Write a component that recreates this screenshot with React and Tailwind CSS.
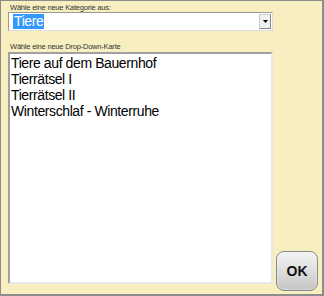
export default function App() {
  return (
    <div className="w-[324px] h-[296px] bg-[#f7efc0] border border-[#8c8c8c] border-r-2 border-b-2 flex flex-col pl-[7px] pt-[2px] pb-[3px]" style={{ fontFamily: '"Liberation Sans", Arial, sans-serif' }}>
      <div className="pl-[2px] text-[7.5px] leading-[9px] tracking-[-0.2px] text-[#333]">Wähle eine neue Kategorie aus:</div>
      <div className="w-[265px] h-[19px] bg-white border border-[#999] border-b-[#ddd] border-r-[#ddd] flex items-center">
        <span className="ml-[4px] bg-[#3399ff] text-white text-[14px] leading-[15px] tracking-[-0.4px] px-[1px]">Tiere</span>
        <div className="ml-auto mr-[1px] w-[12px] h-[15px] bg-[#f0f0f0] border border-[#ccc] border-r-[#888] border-b-[#888] flex items-center justify-center">
          <svg width="5" height="3" viewBox="0 0 5 3"><path d="M0 0h5L2.5 3z" fill="#000" /></svg>
        </div>
      </div>
      <div className="mt-[11px] pl-[2px] text-[7.5px] leading-[10px] tracking-[-0.2px] text-[#333]">Wähle eine neue Drop-Down-Karte</div>
      <div className="flex-1 flex">
        <div className="w-[265px] h-[232px] bg-white border-2 border-t-[#a0a0a0] border-l-[#a0a0a0] border-r-[#e8e8e8] border-b-[#e8e8e8] pt-[1px] pl-[1px] text-[14px] leading-[16px] tracking-[-0.4px] text-black">
          <div>Tiere auf dem Bauernhof</div>
          <div>Tierrätsel I</div>
          <div>Tierrätsel II</div>
          <div>Winterschlaf - Winterruhe</div>
        </div>
        <div className="self-end ml-[3px] w-[42px] h-[40px] rounded-[8px] border border-[#8a8a8a] bg-gradient-to-b from-[#f4f4f4] via-[#dedede] to-[#c4c4c4] shadow-[inset_0_0_2px_rgba(255,255,255,0.9)] flex items-center justify-center">
          <span className="text-[14px] font-bold text-[#111]">OK</span>
        </div>
      </div>
    </div>
  );
}
